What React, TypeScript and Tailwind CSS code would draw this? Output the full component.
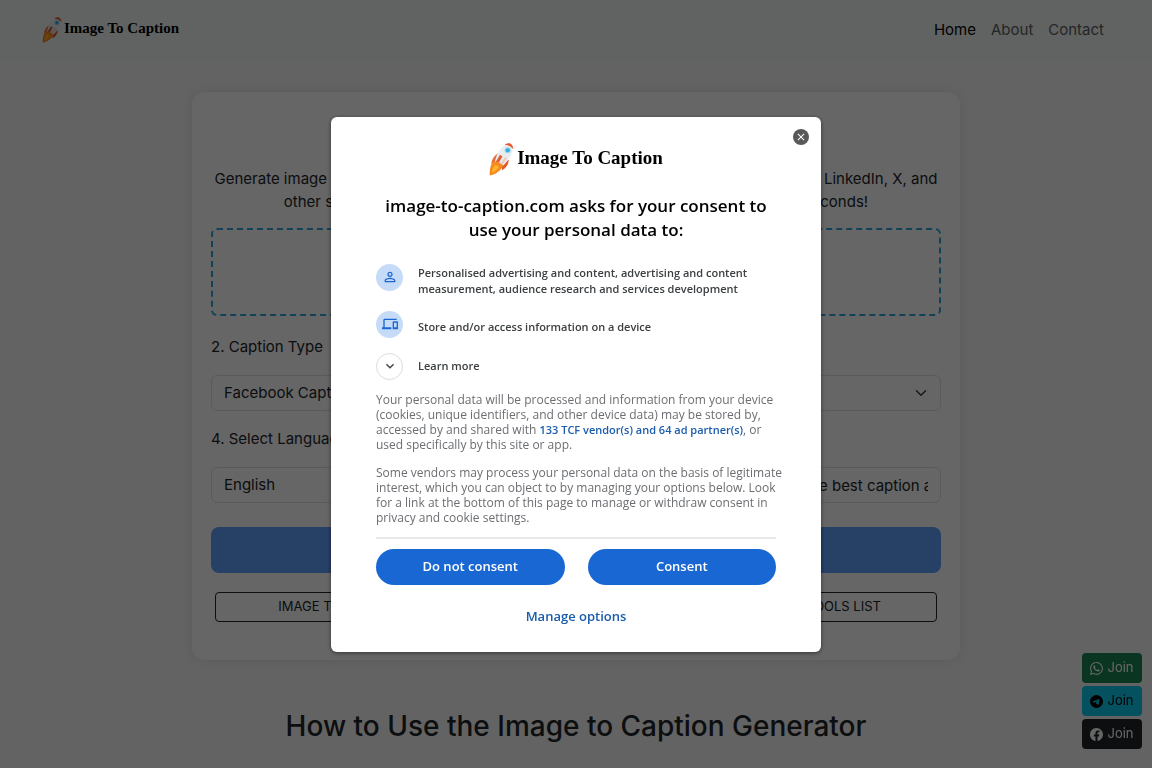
import type { ReactNode } from 'react';
import { BsChevronDown, BsFacebook, BsTelegram, BsWhatsapp } from 'react-icons/bs';
import { MdClose, MdExpandMore, MdOutlineDevices, MdPersonOutline } from 'react-icons/md';

function Rocket({ className }: { className: string }) {
  return (
    <svg viewBox="0 0 48 64" className={className} aria-hidden="true">
      <path d="M17 20 C9 25 5 32 4 41 L15 34 Z" fill="#e8703a" />
      <path d="M38 32 C38 42 32 49 25 53 L25 42 Z" fill="#e2582b" />
      <path d="M32 4 C24 7 14 20 11 38 L26 45 C38 34 46 20 46 8 Z" fill="#e9edf2" />
      <path d="M30 4 C37 -2 46 0 47 12 C43 7 37 4 30 4 Z" fill="#e9552d" />
      <path d="M21 23 L26 26 L17 41 L12 38 Z" fill="#dc6238" />
      <path d="M31 27 L35 29 L25 43 L21 41 Z" fill="#f0c9b8" />
      <circle cx="36" cy="14" r="6" fill="#9fd8ec" />
      <circle cx="36" cy="14" r="4" fill="#35b0d8" />
      <path d="M9 36 C2 42 1 52 1 63 C11 61 23 55 27 43 L18 37 Z" fill="#f58a1f" />
      <path d="M12 42 C7 47 6 52 6 57 C12 55 16 51 19 46 Z" fill="#fdb52b" />
    </svg>
  );
}

function ConsentItem({ icon, children }: { icon: ReactNode; children: ReactNode }) {
  return (
    <li className="flex gap-[15px]">
      <span className="flex size-[27px] shrink-0 items-center justify-center rounded-full bg-[#c6dbf7] text-[#1967d2]">
        {icon}
      </span>
      <span className="pt-px">{children}</span>
    </li>
  );
}

function Navbar() {
  return (
    <nav className="flex h-[60px] items-center justify-between bg-[#f0f8f5] pr-12 pl-[42px]">
      <a href="#" className="flex items-center gap-[2px] text-black">
        <Rocket className="h-[26px] w-5" />
        <span className="pb-1 font-['Liberation_Serif',serif] text-[15px] font-bold">Image To Caption</span>
      </a>
      <div className="flex gap-[15px] text-[#5c5f62]">
        <a href="#" className="text-black">Home</a>
        <a href="#">About</a>
        <a href="#">Contact</a>
      </div>
    </nav>
  );
}

function CaptionForm() {
  return (
    <main className="mx-auto mt-8 max-w-3xl rounded-xl bg-white px-[19px] pt-5 pb-[38px] shadow-[0_0_12px_rgba(0,0,0,0.1)]">
      <h1 className="mb-3 text-center text-[28px] leading-[43px] font-medium">Image to Caption</h1>
      <p className="text-center leading-[23px]">
        Generate image captions for Instagram, Facebook, TikTok, Pinterest, Threads, Reddit, LinkedIn, X, and
        <br />
        other social media platforms with the help of intelligent AI tools, all within seconds!
      </p>
      <label className="mt-[15px] flex h-[88px] items-center justify-center rounded-md border-2 border-dashed border-[#2ba6dc]">
        1. Upload Image
        <input type="file" className="sr-only" />
      </label>

      <div className="mt-[15px] grid grid-cols-2 gap-x-[15px] gap-y-3">
        <div>
          <label htmlFor="type" className="mb-3 block leading-8">2. Caption Type</label>
          <select id="type" className="h-9 w-full appearance-none rounded-md border border-[#dee2e6] bg-white px-3">
            <option>Facebook Caption</option>
          </select>
        </div>
        <div>
          <label htmlFor="vibe" className="mb-3 block leading-8">3. Vibe</label>
          <div className="relative">
            <select id="vibe" className="h-9 w-full appearance-none rounded-md border border-[#dee2e6] bg-white px-3">
              <option>Fun</option>
            </select>
            <BsChevronDown className="pointer-events-none absolute top-3 right-[14px] size-3 stroke-1" />
          </div>
        </div>
        <div>
          <label htmlFor="language" className="mb-3 block leading-8">4. Select Language</label>
          <select id="language" className="h-9 w-full appearance-none rounded-md border border-[#dee2e6] bg-white px-3">
            <option>English</option>
          </select>
        </div>
        <div>
          <label htmlFor="context" className="mb-3 block leading-8">5. Context</label>
          <input
            id="context"
            placeholder="Describe your image and get the best caption and hashtags"
            className="h-9 w-full rounded-md border border-[#dee2e6] px-3 placeholder:text-[#212529]"
          />
        </div>
      </div>

      <button className="mt-6 h-[46px] w-full rounded-lg bg-[#62a0fe] text-white">Generate Caption</button>
      <div className="mt-[19px] grid grid-cols-2 gap-2 px-1 text-[13px]">
        <button className="h-[30px] rounded border border-[#212529]">IMAGE TO CAPTION GENERATOR API</button>
        <button className="h-[30px] rounded border border-[#212529]">ALL THE FREE CAPTION AI TOOLS LIST</button>
      </div>
    </main>
  );
}

function JoinButtons() {
  return (
    <div className="fixed right-[10px] bottom-[19px] flex w-[60px] flex-col gap-[3px] text-[13px]">
      <a href="#" className="flex h-[30px] items-center justify-center gap-1 rounded bg-[#198754] text-white">
        <BsWhatsapp className="size-[13px]" /> Join
      </a>
      <a href="#" className="flex h-[30px] items-center justify-center gap-1 rounded bg-[#0dcaf0] text-black">
        <BsTelegram className="size-[13px]" /> Join
      </a>
      <a href="#" className="flex h-[30px] items-center justify-center gap-1 rounded bg-[#212529] text-white">
        <BsFacebook className="size-[13px]" /> Join
      </a>
    </div>
  );
}

function ConsentDialog() {
  return (
    <div className="fixed inset-0 flex items-center justify-center bg-black/60 font-['Open_Sans',sans-serif]">
      <div
        role="dialog"
        aria-modal="true"
        aria-labelledby="consent-title"
        className="relative w-[490px] max-w-full rounded-md bg-white px-[45px] py-[26px] text-xs shadow-[0_1px_4px_rgba(0,0,0,0.5)]"
      >
        <button
          aria-label="Close"
          className="absolute top-3 right-3 flex size-4 items-center justify-center rounded-full bg-[#58595b] text-white"
        >
          <MdClose className="size-3" />
        </button>

        <div className="flex items-center justify-center gap-[3px] text-black">
          <Rocket className="h-[33px] w-[25px]" />
          <span className="pb-0.5 font-['Liberation_Serif',serif] text-[19px] font-bold">Image To Caption</span>
        </div>
        <h2 id="consent-title" className="mt-[18px] text-center text-[17px] leading-6 font-semibold text-black">
          image-to-caption.com asks for your consent to use your personal data to:
        </h2>

        <ul className="mt-[22px] flex flex-col gap-[14px] text-[11px] leading-4 font-semibold text-[#3c4043]">
          <ConsentItem icon={<MdPersonOutline className="size-4" />}>
            Personalised advertising and content, advertising and content measurement, audience research and services
            development
          </ConsentItem>
          <ConsentItem icon={<MdOutlineDevices className="size-4" />}>
            <span className="block pt-[7px]">Store and/or access information on a device</span>
          </ConsentItem>
        </ul>
        <button className="mt-[15px] flex items-center gap-[15px] text-[11px] font-semibold text-[#3c4043]">
          <span className="flex size-[27px] items-center justify-center rounded-full border border-[#dadce0]">
            <MdExpandMore className="size-4" />
          </span>
          Learn more
        </button>

        <div className="mt-3 border-b-2 border-[#e8e8e8] pb-3 leading-[15px] text-[#6b6e72]">
          <div className="-mr-2 flex flex-col gap-[13px]">
            <p>
              Your personal data will be processed and information from your device (cookies, unique identifiers, and
              other device data) may be stored by, accessed by and shared with{' '}
              <a href="#" className="text-[11px] font-semibold text-[#1a5cad]">133 TCF vendor(s) and 64 ad partner(s)</a>,
              or used specifically by this site or app.
            </p>
            <p>
              Some vendors may process your personal data on the basis of legitimate interest, which you can object to
              by managing your options below. Look for a link at the bottom of this page to manage or withdraw consent
              in privacy and cookie settings.
            </p>
          </div>
        </div>

        <div className="mt-[10px] grid grid-cols-2 gap-[23px] text-[13px] font-semibold text-white">
          <button className="h-9 rounded-full bg-[#1967d2]">Do not consent</button>
          <button className="h-9 rounded-full bg-[#1967d2]">Consent</button>
        </div>
        <button className="mx-auto mt-[21px] block text-[13px] leading-5 font-semibold text-[#1a5cad]">
          Manage options
        </button>
      </div>
    </div>
  );
}

export default function App() {
  return (
    <div className="h-screen overflow-hidden bg-[#f8f8f8] font-['Inter',sans-serif] text-[15px] text-[#212529]">
      <Navbar />
      <CaptionForm />
      <h2 className="mt-[46px] text-center text-[28px] leading-10 font-medium">
        How to Use the Image to Caption Generator
      </h2>
      <JoinButtons />
      <ConsentDialog />
    </div>
  );
}
